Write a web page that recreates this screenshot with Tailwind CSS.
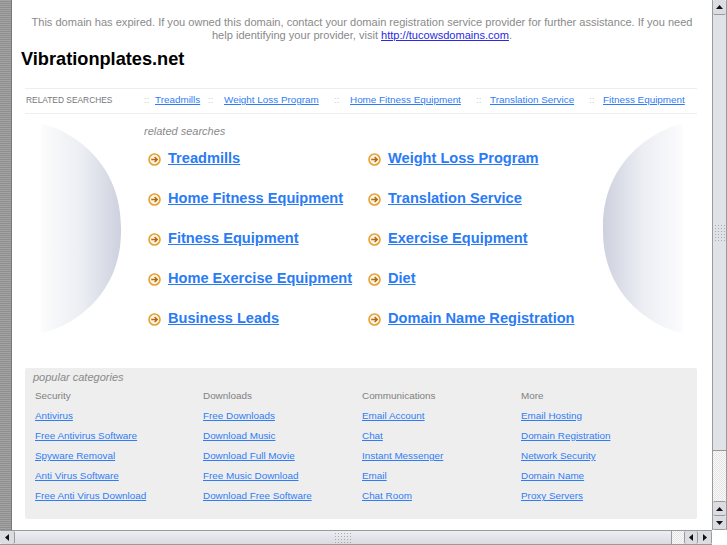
<!DOCTYPE html>
<html>
<head>
<meta charset="utf-8">
<script src="https://cdn.jsdelivr.net/npm/@tailwindcss/browser@4"></script>
</head>
<body class="bg-white overflow-hidden">
<div class="w-[727px] h-[545px] flex flex-col font-['Liberation_Sans',Arial,sans-serif] overflow-hidden">
  <div class="flex h-[530px] min-h-0">
    <div class="w-[12px] shrink-0 border-r border-[#777] bg-[repeating-linear-gradient(to_bottom,#a4a4a4_0px,#a4a4a4_1px,#8e8e8e_1px,#8e8e8e_2px)]"></div>
    <main class="relative w-[700px] shrink-0 overflow-hidden">
      <svg class="absolute left-[29px] top-[124px]" width="81" height="210" viewBox="0 0 81 210">
        <defs>
          <linearGradient id="gl" x1="0" x2="1" y1="0" y2="0">
            <stop offset="0" stop-color="#fcfcfd"/>
            <stop offset="0.5" stop-color="#eceef3"/>
            <stop offset="1" stop-color="#cdd1de"/>
          </linearGradient>
        </defs>
        <path d="M0 0 C10 0 81 25 80 105 C81 185 10 209 0 209 Z" fill="url(#gl)"/>
      </svg>
      <svg class="absolute left-[590px] top-[124px]" width="81" height="210" viewBox="0 0 81 210">
        <defs>
          <linearGradient id="gr" x1="1" x2="0" y1="0" y2="0">
            <stop offset="0" stop-color="#fcfcfd"/>
            <stop offset="0.5" stop-color="#eceef3"/>
            <stop offset="1" stop-color="#cdd1de"/>
          </linearGradient>
        </defs>
        <path d="M81 0 C71 0 0 25 1 105 C0 185 71 209 81 209 Z" fill="url(#gr)"/>
      </svg>

      <div class="relative">
        <p class="pt-[16px] px-[14px] text-center text-[11.07px] leading-[13px] text-[#8a8a8a]">This domain has expired. If you owned this domain, contact your domain registration service provider for further assistance. If you need help identifying your provider, visit <a class="text-[#2a2ae0] underline">http://tucowsdomains.com</a>.</p>
        <h1 class="mt-[5px] ml-[9px] text-[18.2px] leading-[24px] font-bold text-black">Vibrationplates.net</h1>

        <div class="mt-[17px] ml-[13px] w-[672px] h-[26px] pb-[1px] border-y border-[#eeeeee] flex items-center text-[9.9px] text-[#2f7df6] relative">
          <span class="w-[119px] pl-[1px] text-[8.4px] text-[#777]">RELATED SEARCHES</span>
          <span class="text-[#ccc] w-[11px]">::</span><a class="underline w-[53px] whitespace-nowrap">Treadmills</a>
          <span class="text-[#ccc] w-[16px]">::</span><a class="underline w-[110px] whitespace-nowrap">Weight Loss Program</a>
          <span class="text-[#ccc] w-[16px]">::</span><a class="underline w-[126px] whitespace-nowrap">Home Fitness Equipment</a>
          <span class="text-[#ccc] w-[14px]">::</span><a class="underline w-[99px] whitespace-nowrap">Translation Service</a>
          <span class="text-[#ccc] w-[14px]">::</span><a class="underline whitespace-nowrap">Fitness Equipment</a>
        </div>

        <div class="ml-[132px] mt-[11px] text-[11px] leading-[13px] italic text-[#8a8a8a]">related searches</div>

        <div class="ml-[136px] mt-[10px] grid grid-cols-[220px_220px] auto-rows-[40px] text-[14.6px] leading-[20px] font-bold text-[#2a7bf6]">
          <a class="flex items-center gap-[7px] h-[20px] whitespace-nowrap"><svg class="shrink-0 mt-[3px]" width="13" height="13" viewBox="0 0 13 13"><circle cx="6.5" cy="6.5" r="5.5" fill="#fdf6e8" stroke="#e8a030" stroke-width="1.6"/><path d="M3.2 6.5H9M6.6 4L9.2 6.5L6.6 9" fill="none" stroke="#b06a10" stroke-width="1.5"/></svg><span class="underline">Treadmills</span></a>
          <a class="flex items-center gap-[7px] h-[20px] whitespace-nowrap"><svg class="shrink-0 mt-[3px]" width="13" height="13" viewBox="0 0 13 13"><circle cx="6.5" cy="6.5" r="5.5" fill="#fdf6e8" stroke="#e8a030" stroke-width="1.6"/><path d="M3.2 6.5H9M6.6 4L9.2 6.5L6.6 9" fill="none" stroke="#b06a10" stroke-width="1.5"/></svg><span class="underline">Weight Loss Program</span></a>
          <a class="flex items-center gap-[7px] h-[20px] whitespace-nowrap"><svg class="shrink-0 mt-[3px]" width="13" height="13" viewBox="0 0 13 13"><circle cx="6.5" cy="6.5" r="5.5" fill="#fdf6e8" stroke="#e8a030" stroke-width="1.6"/><path d="M3.2 6.5H9M6.6 4L9.2 6.5L6.6 9" fill="none" stroke="#b06a10" stroke-width="1.5"/></svg><span class="underline">Home Fitness Equipment</span></a>
          <a class="flex items-center gap-[7px] h-[20px] whitespace-nowrap"><svg class="shrink-0 mt-[3px]" width="13" height="13" viewBox="0 0 13 13"><circle cx="6.5" cy="6.5" r="5.5" fill="#fdf6e8" stroke="#e8a030" stroke-width="1.6"/><path d="M3.2 6.5H9M6.6 4L9.2 6.5L6.6 9" fill="none" stroke="#b06a10" stroke-width="1.5"/></svg><span class="underline">Translation Service</span></a>
          <a class="flex items-center gap-[7px] h-[20px] whitespace-nowrap"><svg class="shrink-0 mt-[3px]" width="13" height="13" viewBox="0 0 13 13"><circle cx="6.5" cy="6.5" r="5.5" fill="#fdf6e8" stroke="#e8a030" stroke-width="1.6"/><path d="M3.2 6.5H9M6.6 4L9.2 6.5L6.6 9" fill="none" stroke="#b06a10" stroke-width="1.5"/></svg><span class="underline">Fitness Equipment</span></a>
          <a class="flex items-center gap-[7px] h-[20px] whitespace-nowrap"><svg class="shrink-0 mt-[3px]" width="13" height="13" viewBox="0 0 13 13"><circle cx="6.5" cy="6.5" r="5.5" fill="#fdf6e8" stroke="#e8a030" stroke-width="1.6"/><path d="M3.2 6.5H9M6.6 4L9.2 6.5L6.6 9" fill="none" stroke="#b06a10" stroke-width="1.5"/></svg><span class="underline">Exercise Equipment</span></a>
          <a class="flex items-center gap-[7px] h-[20px] whitespace-nowrap"><svg class="shrink-0 mt-[3px]" width="13" height="13" viewBox="0 0 13 13"><circle cx="6.5" cy="6.5" r="5.5" fill="#fdf6e8" stroke="#e8a030" stroke-width="1.6"/><path d="M3.2 6.5H9M6.6 4L9.2 6.5L6.6 9" fill="none" stroke="#b06a10" stroke-width="1.5"/></svg><span class="underline">Home Exercise Equipment</span></a>
          <a class="flex items-center gap-[7px] h-[20px] whitespace-nowrap"><svg class="shrink-0 mt-[3px]" width="13" height="13" viewBox="0 0 13 13"><circle cx="6.5" cy="6.5" r="5.5" fill="#fdf6e8" stroke="#e8a030" stroke-width="1.6"/><path d="M3.2 6.5H9M6.6 4L9.2 6.5L6.6 9" fill="none" stroke="#b06a10" stroke-width="1.5"/></svg><span class="underline">Diet</span></a>
          <a class="flex items-center gap-[7px] h-[20px] whitespace-nowrap"><svg class="shrink-0 mt-[3px]" width="13" height="13" viewBox="0 0 13 13"><circle cx="6.5" cy="6.5" r="5.5" fill="#fdf6e8" stroke="#e8a030" stroke-width="1.6"/><path d="M3.2 6.5H9M6.6 4L9.2 6.5L6.6 9" fill="none" stroke="#b06a10" stroke-width="1.5"/></svg><span class="underline">Business Leads</span></a>
          <a class="flex items-center gap-[7px] h-[20px] whitespace-nowrap"><svg class="shrink-0 mt-[3px]" width="13" height="13" viewBox="0 0 13 13"><circle cx="6.5" cy="6.5" r="5.5" fill="#fdf6e8" stroke="#e8a030" stroke-width="1.6"/><path d="M3.2 6.5H9M6.6 4L9.2 6.5L6.6 9" fill="none" stroke="#b06a10" stroke-width="1.5"/></svg><span class="underline">Domain Name Registration</span></a>
        </div>

        <section class="absolute left-[13px] top-[368px] w-[672px] h-[151px] rounded-[2px] bg-[#eeeeee]">
          <div class="pl-[8px] pt-[3px] text-[11px] leading-[13px] italic text-[#8a8a8a]">popular categories</div>
          <div class="ml-[10px] mt-[2px] grid grid-cols-[168px_159px_159px_150px] text-[9.9px] leading-[20px] text-[#2f7df6]">
            <ul><li class="text-[#808080]">Security</li><li><a class="underline">Antivirus</a></li><li><a class="underline">Free Antivirus Software</a></li><li><a class="underline">Spyware Removal</a></li><li><a class="underline">Anti Virus Software</a></li><li><a class="underline">Free Anti Virus Download</a></li></ul>
            <ul><li class="text-[#808080]">Downloads</li><li><a class="underline">Free Downloads</a></li><li><a class="underline">Download Music</a></li><li><a class="underline">Download Full Movie</a></li><li><a class="underline">Free Music Download</a></li><li><a class="underline">Download Free Software</a></li></ul>
            <ul><li class="text-[#808080]">Communications</li><li><a class="underline">Email Account</a></li><li><a class="underline">Chat</a></li><li><a class="underline">Instant Messenger</a></li><li><a class="underline">Email</a></li><li><a class="underline">Chat Room</a></li></ul>
            <ul><li class="text-[#808080]">More</li><li><a class="underline">Email Hosting</a></li><li><a class="underline">Domain Registration</a></li><li><a class="underline">Network Security</a></li><li><a class="underline">Domain Name</a></li><li><a class="underline">Proxy Servers</a></li></ul>
          </div>
        </section>
      </div>
    </main>
    <!-- vertical scrollbar -->
    <div class="w-[15px] shrink-0 flex flex-col border-x border-[#9a9a9a] bg-[repeating-conic-gradient(#e4e4e4_0%_25%,#fafafa_0%_50%)] bg-[length:2px_2px]">
      <div class="h-[15px] shrink-0 flex items-center justify-center rounded-[2px] bg-[#dcdde2] border-b border-[#9a9a9a]"><svg width="7" height="4" viewBox="0 0 7 4"><path d="M3.5 0L7 4H0Z" fill="#111"/></svg></div>
      <div class="h-[436px] shrink-0 flex items-center justify-center bg-[#e1e2e7] border-b border-[#9a9a9a]">
        <div class="w-[11px] h-[18px] bg-[radial-gradient(#aaa_1px,transparent_1px)] bg-[length:3px_3px]"></div>
      </div>
      <div class="flex-1"></div>
      <div class="h-[15px] shrink-0 flex items-center justify-center rounded-[2px] bg-[#dcdde2] border-y border-[#9a9a9a]"><svg width="7" height="4" viewBox="0 0 7 4"><path d="M3.5 0L7 4H0Z" fill="#111"/></svg></div>
      <div class="h-[14px] shrink-0 flex items-center justify-center rounded-[2px] bg-[#dcdde2] border-b border-[#9a9a9a]"><svg width="7" height="4" viewBox="0 0 7 4"><path d="M0 0H7L3.5 4Z" fill="#111"/></svg></div>
    </div>
  </div>
  <!-- horizontal scrollbar -->
  <div class="h-[15px] shrink-0 flex w-[712px] border-y border-[#9a9a9a] bg-[repeating-conic-gradient(#e4e4e4_0%_25%,#fafafa_0%_50%)] bg-[length:2px_2px]">
    <div class="w-[15px] shrink-0 flex items-center justify-center rounded-[2px] bg-[#dcdde2] border-r border-[#9a9a9a]"><svg width="4" height="7" viewBox="0 0 4 7"><path d="M4 0V7L0 3.5Z" fill="#111"/></svg></div>
    <div class="w-[657px] shrink-0 flex items-center justify-center bg-linear-to-b from-[#eceef2] to-[#d9dbe1] border-r border-[#9a9a9a]">
      <div class="w-[18px] h-[11px] bg-[radial-gradient(#aaa_1px,transparent_1px)] bg-[length:3px_3px]"></div>
    </div>
    <div class="w-[12px] shrink-0"></div>
    <div class="w-[14px] shrink-0 flex items-center justify-center rounded-[2px] bg-[#dcdde2] border-x border-[#9a9a9a]"><svg width="4" height="7" viewBox="0 0 4 7"><path d="M4 0V7L0 3.5Z" fill="#111"/></svg></div>
    <div class="w-[14px] shrink-0 flex items-center justify-center rounded-[2px] bg-[#dcdde2] border-r border-[#9a9a9a]"><svg width="4" height="7" viewBox="0 0 4 7"><path d="M0 0V7L4 3.5Z" fill="#111"/></svg></div>
  </div>
</div>
</body>
</html>
